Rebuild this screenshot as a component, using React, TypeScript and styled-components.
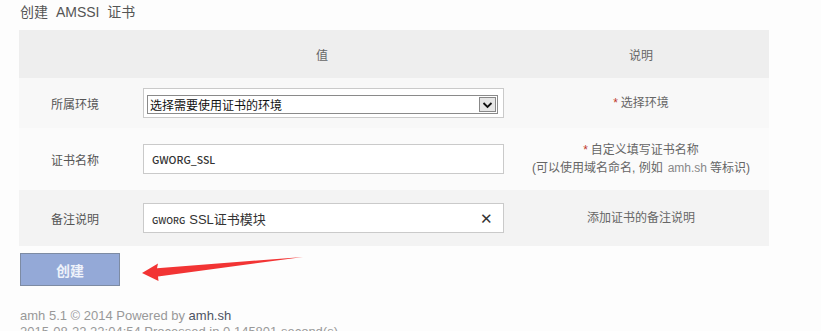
import React from "react";
import styled, { createGlobalStyle } from "styled-components";

const Global = createGlobalStyle`
  html, body { margin: 0; padding: 0; background: #fdfdfd; }
  body { font-family: "Liberation Sans", "Noto Sans CJK SC", sans-serif; color: #555; overflow: hidden; }
`;

const Page = styled.div`
  position: relative;
  padding: 0 0 0 19px;
  width: 821px;
  height: 331px;
  box-sizing: border-box;
`;

const Title = styled.h2`
  margin: 0;
  height: 30px;
  padding-left: 1px;
  font-size: 14px;
  font-weight: normal;
  line-height: 24px;
  color: #555;
  word-spacing: 4px;
`;

const Table = styled.div`
  width: 750px;
  display: grid;
  grid-template-columns: 112px 382px 256px;
`;

const HeadCell = styled.div`
  background: #eeeeee;
  height: 48px;
  display: flex;
  align-items: center;
  justify-content: center;
  font-size: 12px;
  color: #666;
`;

const Row = styled.div<{ $h: number; $bg: string }>`
  display: contents;
  & > div {
    height: ${(p) => p.$h}px;
    background: ${(p) => p.$bg};
  }
`;

const LabelCell = styled.div`
  display: flex;
  align-items: center;
  justify-content: center;
  font-size: 12px;
  color: #555;
`;

const FieldCell = styled.div`
  display: flex;
  align-items: center;
  padding: 0 9px 0 12px;
`;

const DescCell = styled.div`
  display: flex;
  flex-direction: column;
  align-items: center;
  justify-content: center;
  font-size: 12px;
  line-height: 18px;
  color: #666;
`;

const Star = styled.span`
  color: #c0392b;
  margin-right: 3px;
`;

const Latin = styled.span`
  color: #888;
  font-family: "Liberation Sans", sans-serif;
  margin: 0 3px 0 5px;
`;

const SelectBox = styled.div`
  width: 361px;
  height: 30px;
  box-sizing: border-box;
  border: 1px solid #cacaca;
  background: #fff;
  padding: 6px 5px 4px 3px;
`;

const SelectInner = styled.div`
  height: 19px;
  box-sizing: border-box;
  border: 1px solid #8a8a8a;
  display: flex;
  align-items: center;
  justify-content: space-between;
  font-size: 12px;
  color: #111;
  padding-left: 2px;
  padding-right: 1px;
`;

const DropBtn = styled.div`
  width: 17px;
  height: 15px;
  box-sizing: border-box;
  border: 1px solid #888;
  background: #e6e6e6;
  display: flex;
  align-items: center;
  justify-content: center;
`;

const InputBox = styled.div`
  width: 361px;
  height: 30px;
  box-sizing: border-box;
  border: 1px solid #cacaca;
  background: #fff;
  display: flex;
  align-items: center;
  justify-content: space-between;
  padding: 0 10px 0 8px;
  color: #222;
`;

const Caps = styled.span<{ $size: number; $gap?: number }>`
  font-family: "Noto Sans CJK SC", sans-serif;
  font-size: ${(p) => p.$size}px;
  font-weight: 500;
  color: #333;
  margin-right: ${(p) => p.$gap ?? 0}px;
`;

const Value = styled.span`
  font-size: 13px;
  color: #333;
`;

const Clear = styled.span`
  font-size: 15px;
  color: #333;
  line-height: 1;
`;

const Button = styled.button`
  margin-top: 7px;
  margin-left: 1px;
  width: 100px;
  height: 33px;
  box-sizing: border-box;
  background: #94a9d7;
  border: 1px solid #7d8ba3;
  color: #eef2fa;
  font-family: "Noto Sans CJK SC", sans-serif;
  font-weight: bold;
  font-size: 14px;
  padding: 0;
`;

const Footer = styled.div`
  margin-top: 22px;
  padding-left: 1px;
  font-size: 13px;
  line-height: 16px;
  color: #999;
  font-family: "Liberation Sans", sans-serif;
`;

const FooterLink = styled.span`
  color: #4c5363;
`;

const Arrow = styled.svg`
  position: absolute;
  left: 0;
  top: 0;
  pointer-events: none;
`;

export default function App() {
  return (
    <>
      <Global />
      <Page>
        <Title>创建 AMSSI 证书</Title>
        <Table>
          <HeadCell />
          <HeadCell>值</HeadCell>
          <HeadCell>说明</HeadCell>

          <Row $h={50} $bg="#f8f8f8">
            <LabelCell>所属环境</LabelCell>
            <FieldCell>
              <SelectBox>
                <SelectInner>
                  <span>选择需要使用证书的环境</span>
                  <DropBtn>
                    <svg width="11" height="8" viewBox="0 0 11 8">
                      <path d="M1.5 2 L5.5 6 L9.5 2" stroke="#111" strokeWidth="1.8" fill="none" />
                    </svg>
                  </DropBtn>
                </SelectInner>
              </SelectBox>
            </FieldCell>
            <DescCell>
              <div>
                <Star>*</Star>选择环境
              </div>
            </DescCell>
          </Row>

          <Row $h={62} $bg="#fbfbfb">
            <LabelCell>证书名称</LabelCell>
            <FieldCell>
              <InputBox>
                <Caps $size={10.5}>GWORG_SSL</Caps>
              </InputBox>
            </FieldCell>
            <DescCell>
              <div>
                <Star>*</Star>自定义填写证书名称
              </div>
              <div>
                (可以使用域名命名, 例如<Latin>amh.sh</Latin>等标识)
              </div>
            </DescCell>
          </Row>

          <Row $h={56} $bg="#f3f3f3">
            <LabelCell>备注说明</LabelCell>
            <FieldCell>
              <InputBox>
                <span>
                  <Caps $size={9} $gap={4}>GWORG</Caps>
                  <Value>SSL证书模块</Value>
                </span>
                <Clear>✕</Clear>
              </InputBox>
            </FieldCell>
            <DescCell>
              <div>添加证书的备注说明</div>
            </DescCell>
          </Row>
        </Table>
        <Button>创建</Button>
        <Footer>
          <div>
            amh 5.1 © 2014 Powered by <FooterLink>amh.sh</FooterLink>
          </div>
          <div>2015-08-22 22:04:54 Processed in 0.145801 second(s)</div>
        </Footer>
        <Arrow width="821" height="331" viewBox="0 0 821 331">
          <path
            d="M142 273 L158 263.5 L157 268.2 L303 257 L158 276.5 L158.5 281 Z"
            fill="#f23434"
          />
        </Arrow>
      </Page>
    </>
  );
}
